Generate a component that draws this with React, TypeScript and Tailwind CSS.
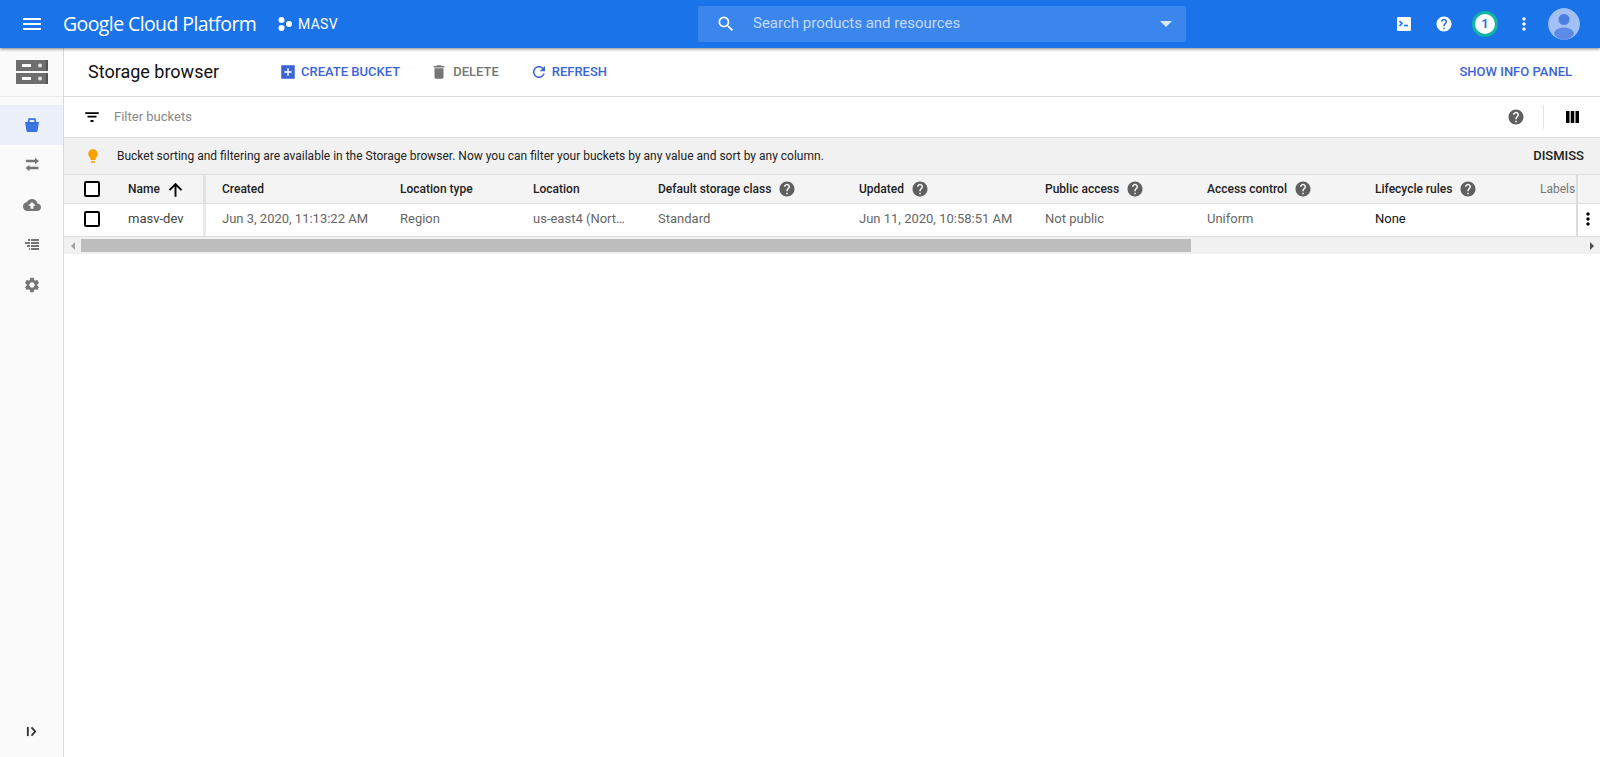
import React from "react";

const P = {
  menu: "M3 18h18v-2H3v2zm0-5h18v-2H3v2zm0-7v2h18V6H3z",
  search: "M15.5 14h-.79l-.28-.27A6.471 6.471 0 0 0 16 9.5 6.5 6.5 0 1 0 9.5 16c1.61 0 3.09-.59 4.23-1.57l.27.28v.79l5 4.99L20.49 19l-4.99-5zm-6 0C7.01 14 5 11.99 5 9.5S7.01 5 9.5 5 14 7.01 14 9.5 11.99 14 9.5 14z",
  help: "M12 2C6.48 2 2 6.48 2 12s4.48 10 10 10 10-4.48 10-10S17.52 2 12 2zm1 17h-2v-2h2v2zm2.07-7.75l-.9.92C13.45 12.9 13 13.5 13 15h-2v-.5c0-1.1.45-2.1 1.17-2.83l1.24-1.26c.37-.36.59-.86.59-1.41 0-1.1-.9-2-2-2s-2 .9-2 2H8c0-2.21 1.79-4 4-4s4 1.79 4 4c0 .88-.36 1.68-.93 2.25z",
  more: "M12 8c1.1 0 2-.9 2-2s-.9-2-2-2-2 .9-2 2 .9 2 2 2zm0 2c-1.1 0-2 .9-2 2s.9 2 2 2 2-.9 2-2-.9-2-2-2zm0 6c-1.1 0-2 .9-2 2s.9 2 2 2 2-.9 2-2-.9-2-2-2z",
  add: "M21 3H3v18h18V3zm-4 10h-4v4h-2v-4H7v-2h4V7h2v4h4v2z",
  del: "M6 19c0 1.1.9 2 2 2h8c1.1 0 2-.9 2-2V7H6v12zM19 4h-3.5l-1-1h-5l-1 1H5v2h14V4z",
  refresh: "M17.65 6.35C16.2 4.9 14.21 4 12 4c-4.42 0-7.99 3.58-7.99 8s3.57 8 7.99 8c3.73 0 6.84-2.55 7.73-6h-2.08c-.82 2.33-3.04 4-5.65 4-3.31 0-6-2.69-6-6s2.69-6 6-6c1.66 0 3.14.69 4.22 1.78L13 11h7V4l-2.35 2.35z",
  filter: "M10 18.500h4v-2.500h-4v2.500zM3 5.500v2.500h18V5.500H3zm3 7.250h12v-2.500H6v2.500z",
  bulb: "M9 21c0 .55.45 1 1 1h4c.55 0 1-.45 1-1v-1H9v1zm3-19C8.14 2 5 5.14 5 9c0 2.38 1.19 4.47 3 5.74V17c0 .55.45 1 1 1h6c.55 0 1-.45 1-1v-2.26c1.81-1.27 3-3.36 3-5.74 0-3.86-3.14-7-7-7z",
  up: "M3.500 12l1.700 1.700L10.800 8.200V21h2.400V8.200l5.600 5.500 1.700-1.700L12 3.500z",
  upload: "M19.35 10.04C18.67 6.59 15.64 4 12 4 9.11 4 6.6 5.64 5.35 8.04 2.34 8.36 0 10.91 0 14c0 3.31 2.69 6 6 6h13c2.76 0 5-2.24 5-5 0-2.64-2.05-4.78-4.65-4.96zM14 13v4h-4v-4H7l5-5 5 5h-3z",
  gear: "M19.14 12.94c.04-.3.06-.61.06-.94 0-.32-.02-.64-.07-.94l2.03-1.58c.18-.14.23-.41.12-.61l-1.92-3.32c-.12-.22-.37-.29-.59-.22l-2.39.96c-.5-.38-1.03-.7-1.62-.94l-.36-2.54c-.04-.24-.24-.41-.48-.41h-3.84c-.24 0-.43.17-.47.41l-.36 2.54c-.59.24-1.13.57-1.62.94l-2.39-.96c-.22-.08-.47 0-.59.22L2.74 8.87c-.12.21-.08.47.12.61l2.03 1.58c-.05.3-.09.63-.09.94s.02.64.07.94l-2.03 1.58c-.18.14-.23.41-.12.61l1.92 3.32c.12.22.37.29.59.22l2.39-.96c.5.38 1.03.7 1.62.94l.36 2.54c.05.24.24.41.48.41h3.84c.24 0 .44-.17.47-.41l.36-2.54c.59-.24 1.13-.56 1.62-.94l2.39.96c.22.08.47 0 .59-.22l1.92-3.32c.12-.22.07-.47-.12-.61l-2.01-1.58zM12 15.6c-1.98 0-3.6-1.62-3.6-3.6s1.62-3.6 3.6-3.6 3.6 1.62 3.6 3.6-1.62 3.6-3.6 3.6z",
};

function Icon({ d, className }: { d: string; className: string }) {
  return (
    <svg viewBox="0 0 24 24" fill="currentColor" className={className}>
      <path d={d} />
    </svg>
  );
}

function Help() {
  return <Icon d={P.help} className="w-[18px] h-[18px] text-[#5f5f5f] shrink-0" />;
}

function Check() {
  return <div className="w-[16px] h-[16px] border-2 border-black rounded-[2px] bg-white shrink-0" />;
}

function Bucket() {
  return (
    <svg viewBox="0 0 18 18" className="w-[18px] h-[18px]" fill="currentColor">
      <path d="M2 6h14l-1.500 9c-.1.6-.5 1-1 1h-9c-.5 0-.9-.4-1-1z" />
      <path d="M5.300 7l.9-3.800h5.600l.9 3.800" fill="none" stroke="currentColor" strokeWidth="1.700" />
    </svg>
  );
}

function Transfer() {
  return (
    <svg viewBox="0 0 18 18" className="w-[18px] h-[18px]" fill="currentColor">
      <path d="M3 3.700h9V1.800L16 5l-4 3.200V6.300H3z" />
      <path d="M15.500 10.700h-9V8.800L2.500 12l4 3.200v-1.900h9z" />
    </svg>
  );
}

function Lifecycle() {
  return (
    <svg viewBox="0 0 18 18" className="w-[18px] h-[18px]" fill="currentColor">
      <path d="M8 3h8v2H8zM8 6h8v2H8zM8 9h8v2H8zM8 12h8v2H8zM5 3h2v2H5zM2 6h5v2H2zM4 9h3v2H4zM6 12h1v2H6z" />
    </svg>
  );
}

const cols: { t: string; v: string; w: string; help?: boolean; dark?: boolean }[] = [
  { t: "Created", v: "Jun 3, 2020, 11:13:22 AM", w: "w-[178px]" },
  { t: "Location type", v: "Region", w: "w-[133px]" },
  { t: "Location", v: "us-east4 (Nort…", w: "w-[125px]" },
  { t: "Default storage class", v: "Standard", w: "w-[201px]", help: true },
  { t: "Updated", v: "Jun 11, 2020, 10:58:51 AM", w: "w-[186px]", help: true },
  { t: "Public access", v: "Not public", w: "w-[162px]", help: true },
  { t: "Access control", v: "Uniform", w: "w-[168px]", help: true },
  { t: "Lifecycle rules", v: "None", w: "w-[165px]", help: true, dark: true },
];

export default function App() {
  return (
    <div className="h-[757px] w-[1600px] overflow-hidden flex flex-col bg-white font-['Roboto',sans-serif] text-black">
      <header className="relative z-10 h-12 shrink-0 bg-[#1a73e8] shadow-[0_1px_3px_rgba(0,0,0,0.5)] flex items-center text-white">
        <Icon d={P.menu} className="w-6 h-6 ml-[20px]" />
        <div className="ml-[19px] text-[19.500px] font-['Open_Sans',sans-serif] tracking-[-0.6px] w-[192px] whitespace-nowrap">Google Cloud Platform</div>
        <svg viewBox="0 0 14 14" className="ml-[23px] w-[14px] h-[14px]" fill="currentColor">
          <circle cx="3.500" cy="3" r="3" />
          <circle cx="3.500" cy="11" r="3" />
          <circle cx="11" cy="7" r="3" />
        </svg>
        <div className="ml-[6px] text-[14px] font-normal tracking-[0.3px] w-[40px]">MASV</div>
        <div className="ml-[360px] w-[488px] h-[36px] bg-[#3b86ec] rounded-[2px] flex items-center pl-[18px] pr-[14px]">
          <Icon d={P.search} className="w-[20px] h-[20px] text-white" />
          <span className="ml-[17px] pb-[2px] text-[15px] text-[#c5dafa] flex-1">Search products and resources</span>
          <svg viewBox="0 0 12 6" className="w-[12px] h-[6px]" fill="#dbe8fc"><path d="M0 0h12L6 6z" /></svg>
        </div>
        <div className="flex-1 flex items-center justify-end pr-[20px]">
          <svg viewBox="0 0 14 14" className="w-[14px] h-[14px] mr-[24px]">
            <rect width="14" height="14" rx="1" fill="#fff" />
            <path d="M2.500 4l2.500 2.500L2.500 9" stroke="#1a73e8" strokeWidth="1.600" fill="none" />
            <path d="M7 8.500h4" stroke="#1a73e8" strokeWidth="1.600" />
          </svg>
          <Icon d={P.help} className="w-[18px] h-[18px] mr-[19px] text-white" />
          <div className="w-[26px] h-[26px] rounded-full bg-white border-[3px] border-[#12b5a0] flex items-center justify-center text-[#1a73e8] text-[12px] font-bold mr-[16px]">1</div>
          <Icon d={P.more} className="w-[20px] h-[20px] mr-[14px] text-white" />
          <svg viewBox="0 0 32 32" className="w-[32px] h-[32px] rounded-full">
            <circle cx="16" cy="16" r="16" fill="#a1c0f6" />
            <circle cx="16" cy="11.500" r="5.500" fill="#4d7fe3" />
            <path d="M6 26c0-4 5-6.500 10-6.500S26 22 26 26c-2.500 3.500-6 6-10 6s-7.500-2.500-10-6z" fill="#5c8ae6" />
          </svg>
        </div>
      </header>

      <div className="flex-1 flex min-h-0">
        <aside className="w-[64px] shrink-0 bg-[#fafafa] border-r border-[#dadada] flex flex-col">
          <div className="h-[49px] shrink-0 border-b border-[#ececec] flex items-center justify-center">
            <svg viewBox="0 0 32 24" className="w-[32px] h-[24px]">
              <rect width="32" height="11" y="0" fill="#6e6e6e" />
              <rect width="32" height="11" y="13" fill="#6e6e6e" />
              <rect x="30" width="2" height="11" y="0" fill="#555" />
              <rect x="30" width="2" height="11" y="13" fill="#555" />
              <rect x="6" y="4" width="9" height="3" fill="#fff" />
              <rect x="6" y="17" width="9" height="3" fill="#fff" />
              <circle cx="24" cy="5.500" r="2" fill="#e4e4e4" />
              <circle cx="24" cy="18.500" r="2" fill="#e4e4e4" />
            </svg>
          </div>
          <div className="mt-[8px] flex flex-col text-[#757575]">
            <div className="h-[40px] bg-[#ebf0fa] flex items-center justify-center text-[#3b73e0]">
              <Bucket />
            </div>
            <div className="h-[40px] flex items-center justify-center"><Transfer /></div>
            <div className="h-[40px] flex items-center justify-center"><Icon d={P.upload} className="w-[18px] h-[18px]" /></div>
            <div className="h-[40px] flex items-center justify-center"><Lifecycle /></div>
            <div className="h-[40px] flex items-center justify-center"><Icon d={P.gear} className="w-[18px] h-[18px]" /></div>
          </div>
          <div className="mt-auto mb-[20px] flex items-center justify-center text-[#333]">
            <svg viewBox="0 0 12 12" className="w-[11px] h-[11px]" fill="none" stroke="currentColor" strokeWidth="2">
              <path d="M2 1v10" />
              <path d="M6 1.500L10 6l-4 4.500" />
            </svg>
          </div>
        </aside>

        <main className="flex-1 min-w-0 flex flex-col">
          <div className="h-[49px] shrink-0 border-b border-[#dcdcdc] flex items-center pl-[24px] pr-[28px] text-[14px]">
            <h1 className="text-[18px] w-[191px] pb-[2px] text-[#111]">Storage browser</h1>
            <button className="flex items-center text-[#3b65d6] text-[13px] font-medium">
              <Icon d={P.add} className="w-[18px] h-[18px] mr-[4px]" />CREATE BUCKET
            </button>
            <button className="ml-[30px] flex items-center text-[#757575] text-[13px] font-medium">
              <Icon d={P.del} className="w-[18px] h-[18px] mr-[5px]" />DELETE
            </button>
            <button className="ml-[31px] flex items-center text-[#3b65d6] text-[13px] font-medium">
              <Icon d={P.refresh} className="w-[18px] h-[18px] mr-[4px]" />REFRESH
            </button>
            <button className="ml-auto text-[#3b65d6] text-[13px] font-medium">SHOW INFO PANEL</button>
          </div>

          <div className="h-[41px] shrink-0 border-b border-[#dcdcdc] flex items-center pl-[19px] pr-[21px]">
            <Icon d={P.filter} className="w-[18px] h-[18px] text-black" />
            <span className="ml-[13px] text-[13px] text-[#888]">Filter buckets</span>
            <Icon d={P.help} className="w-[18px] h-[18px] ml-auto text-[#5f5f5f]" />
            <div className="w-px h-[24px] bg-[#e4e4e4] ml-[18px]" />
            <svg viewBox="0 0 13 12" className="w-[13px] h-[12px] ml-[22px]" fill="#000">
              <path d="M0 0h3.500v12H0zM4.750 0h3.500v12h-3.500zM9.500 0H13v12H9.500z" />
            </svg>
          </div>

          <div className="h-[37px] shrink-0 bg-[#f1f1f1] border-b border-[#dcdcdc] flex items-center pl-[21px] pr-[16px]">
            <Icon d={P.bulb} className="w-[16px] h-[16px] text-[#f9a000]" />
            <span className="ml-[16px] text-[12px] text-[#222]">Bucket sorting and filtering are available in the Storage browser. Now you can filter your buckets by any value and sort by any column.</span>
            <button className="ml-auto text-[13px] font-medium text-[#222]">DISMISS</button>
          </div>

          <div className="h-[29px] shrink-0 bg-[#f4f4f4] border-b border-[#dcdcdc] flex items-center text-[12px] text-[#222] font-medium">
            <div className="w-[142px] shrink-0 self-stretch border-r-[3px] border-[#e2e2e2] flex items-center pl-[20px]">
              <Check />
              <span className="ml-[28px]">Name</span>
              <Icon d={P.up} className="w-[19px] h-[19px] ml-[6px] text-black" />
            </div>
            <div className="flex-1 min-w-0 flex items-center overflow-hidden pl-[16px]">
              {cols.map((c) => (
                <div key={c.t} className={`${c.w} shrink-0 flex items-center`}>
                  <span>{c.t}</span>
                  {c.help && <span className="ml-[7px]"><Help /></span>}
                </div>
              ))}
              <span className="text-[#757575] font-normal">Labels</span>
            </div>
            <div className="w-[24px] shrink-0 self-stretch border-l-[2px] border-[#dcdcdc]" />
          </div>

          <div className="h-[33px] shrink-0 border-b border-[#dcdcdc] flex items-center text-[13px] text-[#666]">
            <div className="w-[142px] shrink-0 self-stretch border-r-[3px] border-[#eaeaea] flex items-center pl-[20px] pb-[3px]">
              <Check />
              <span className="ml-[28px] text-[#444]">masv-dev</span>
            </div>
            <div className="flex-1 min-w-0 flex items-center overflow-hidden pl-[16px] pb-[3px]">
              {cols.map((c) => (
                <div key={c.t} className={`${c.w} shrink-0 whitespace-nowrap ${c.dark ? "text-[#111]" : ""}`}>{c.v}</div>
              ))}
            </div>
            <div className="w-[24px] shrink-0 self-stretch border-l-[2px] border-[#dcdcdc] flex items-center justify-center text-black pb-[3px] pr-[2px]">
              <Icon d={P.more} className="w-[20px] h-[20px]" />
            </div>
          </div>

          <div className="h-[17px] shrink-0 bg-[#f1f1f1] flex items-center">
            <div className="w-[17px] flex items-center justify-center">
              <svg viewBox="0 0 4 8" className="w-[4px] h-[8px]" fill="#a3a3a3"><path d="M4 0v8L0 4z" /></svg>
            </div>
            <div className="w-[1110px] h-[13px] bg-[#bdbdbd]" />
            <div className="flex-1 flex items-center justify-end pr-[6px]">
              <svg viewBox="0 0 4 8" className="w-[4px] h-[8px]" fill="#505050"><path d="M0 0v8l4-4z" /></svg>
            </div>
          </div>
        </main>
      </div>
    </div>
  );
}
